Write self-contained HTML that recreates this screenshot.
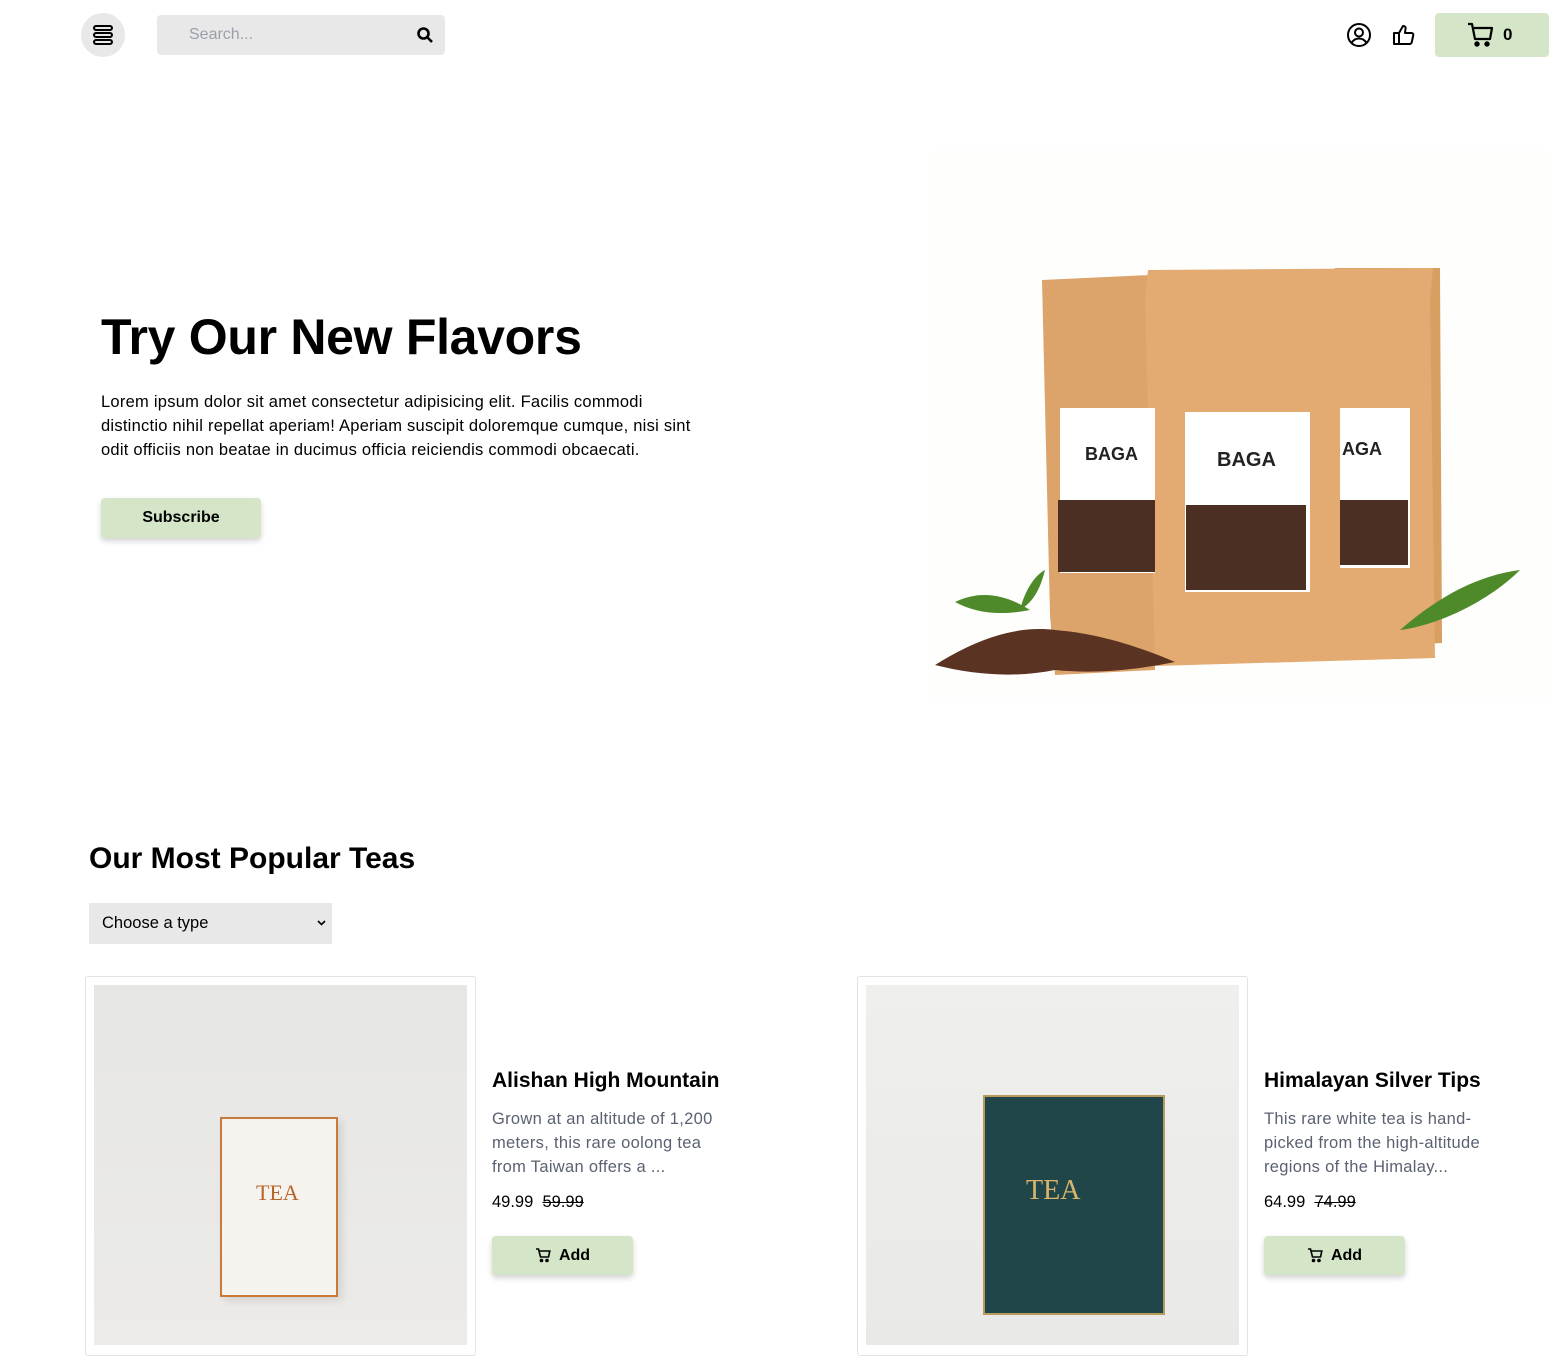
<!DOCTYPE html>
<html><head><style>
*{box-sizing:border-box;margin:0;padding:0}
body{width:1561px;height:1321px;overflow:hidden;background:#fff;font-family:"Liberation Sans",sans-serif;color:#000;position:relative}
.a{position:absolute}
.btn{background:#d4e6c7;border-radius:4px;box-shadow:0 3px 6px rgba(0,0,0,.18);font-weight:bold;font-size:16px;display:flex;align-items:center;justify-content:center;gap:8px}
.card{border:1px solid #e2e2e2;border-radius:3px}
.desc{color:#5a6170;font-size:16.5px;line-height:24px;letter-spacing:.3px}
</style></head><body>
<div class="a" style="left:81px;top:13px;width:44px;height:44px;border-radius:50%;background:#e8e8e8"></div>
<svg class="a" style="left:92px;top:24px" width="22" height="22" viewBox="0 0 22 22" fill="none" stroke="#000" stroke-width="2"><rect x="2" y="2" width="18" height="4" rx="2"/><rect x="2" y="9" width="18" height="4" rx="2"/><rect x="2" y="16" width="18" height="4" rx="2"/></svg>
<div class="a" style="left:157px;top:15px;width:288px;height:40px;background:#e8e8e8;border-radius:4px"></div>
<div class="a" style="left:189px;top:26px;font-size:16px;color:#9aa0ab">Search...</div>
<svg class="a" style="left:416px;top:26px" width="18" height="18" viewBox="0 0 18 18" fill="none" stroke="#000" stroke-width="2.6"><circle cx="7.5" cy="7.5" r="5"/><path d="M11 11l5 5"/></svg>
<svg class="a" style="left:1346px;top:22px" width="26" height="26" viewBox="0 0 26 26" fill="none" stroke="#000" stroke-width="2"><circle cx="13" cy="13" r="11"/><circle cx="13" cy="10.5" r="4"/><path d="M5.5 21c2-3.5 4.5-4.5 7.5-4.5s5.5 1 7.5 4.5"/></svg>
<svg class="a" style="left:1392px;top:23px" width="24" height="24" viewBox="0 0 24 24" fill="none" stroke="#000" stroke-width="2" stroke-linejoin="round"><rect x="2" y="10" width="5" height="11"/><path d="M7 10l4-7c2 0 3 1 2.5 3L13 10h6.5c1.2 0 2 1 1.8 2l-1.5 7c-.2 1-1 2-2 2H7"/></svg>
<div class="a" style="left:1435px;top:13px;width:114px;height:44px;background:#d4e6c7;border-radius:4px"></div>
<svg class="a" style="left:1467px;top:22px" width="28" height="26" viewBox="0 0 28 26" fill="none" stroke="#000" stroke-width="2.2" stroke-linejoin="round"><path d="M1 2h4l3 15h15l2-11H7"/><circle cx="10" cy="22" r="1.6" fill="#000"/><circle cx="20" cy="22" r="1.6" fill="#000"/></svg>
<div class="a" style="left:1503px;top:25px;font-size:17px;font-weight:bold">0</div>

<div class="a" style="left:101px;top:308px;font-size:50px;font-weight:bold;letter-spacing:-.3px">Try Our New Flavors</div>
<div class="a" style="left:101px;top:390px;width:605px;font-size:16.5px;line-height:24px;letter-spacing:.25px">Lorem ipsum dolor sit amet consectetur adipisicing elit. Facilis commodi distinctio nihil repellat aperiam! Aperiam suscipit doloremque cumque, nisi sint odit officiis non beatae in ducimus officia reiciendis commodi obcaecati.</div>
<div class="a btn" style="left:101px;top:498px;width:160px;height:40px">Subscribe</div>

<svg class="a" style="left:930px;top:150px" width="620" height="550" viewBox="0 0 620 550">
<rect width="620" height="550" fill="#fefefd"/>
<path d="M112 130l108-5 5 395-100 5-5-60z" fill="#dca36a"/>
<path d="M405 118l105 0 2 375-100 5z" fill="#d99e62"/>
<path d="M218 120l285-2-3 30 5 360-280 8-10-365z" fill="#e3ab72"/>
<rect x="130" y="258" width="95" height="165" fill="#fff"/><rect x="128" y="350" width="97" height="72" fill="#4a2f22"/>
<rect x="255" y="262" width="125" height="180" fill="#fff"/><rect x="256" y="355" width="120" height="85" fill="#4a2f22"/>
<rect x="410" y="258" width="70" height="160" fill="#fff"/><rect x="410" y="350" width="68" height="65" fill="#4a2f22"/>
<text x="155" y="310" font-family="Liberation Sans" font-weight="bold" font-size="18" fill="#222">BAGA</text>
<text x="287" y="316" font-family="Liberation Sans" font-weight="bold" font-size="20" fill="#222">BAGA</text>
<text x="412" y="305" font-family="Liberation Sans" font-weight="bold" font-size="18" fill="#222">AGA</text>
<path d="M5 515c40-25 80-40 120-35 40 3 80 15 120 32-40 8-80 12-120 8-40 8-80 5-120-5z" fill="#5a3322"/>
<path d="M25 452c25-12 50-8 75 8-30 6-55 3-75-8zM90 460c5-20 15-35 25-40-5 20-12 32-25 40zM470 480c40-35 80-55 120-60-30 30-80 55-120 60z" fill="#4f8a2a"/>
</svg>

<div class="a" style="left:89px;top:842px;font-size:30px;font-weight:bold">Our Most Popular Teas</div>
<div class="a" style="left:89px;top:903px;width:243px;height:41px;background:#e8e8e8;font-size:16.5px;padding:11px 13px">Choose a type<svg style="position:absolute;right:6px;top:17px" width="9" height="6" viewBox="0 0 9 6" fill="none" stroke="#000" stroke-width="1.6"><path d="M1 1l3.5 3.5L8 1"/></svg></div>

<div class="a card" style="left:85px;top:976px;width:391px;height:380px"></div>
<div class="a" style="left:94px;top:985px;width:373px;height:360px;background:linear-gradient(#e6e6e4,#ecebe8)"></div>
<div class="a" style="left:220px;top:1117px;width:118px;height:180px;background:#f6f3ee;border:2px solid #c77a3c;box-shadow:4px 4px 8px rgba(0,0,0,.1)"></div>
<div class="a" style="left:256px;top:1180px;font-family:'Liberation Serif',serif;font-size:22px;color:#b8652a">TEA</div>
<div class="a" style="left:492px;top:1069px;font-size:21px;font-weight:bold">Alishan High Mountain</div>
<div class="a desc" style="left:492px;top:1107px;width:238px">Grown at an altitude of 1,200 meters, this rare oolong tea from Taiwan offers a ...</div>
<div class="a" style="left:492px;top:1193px;font-size:16.5px">49.99 &nbsp;<s>59.99</s></div>
<div class="a btn" style="left:492px;top:1236px;width:141px;height:39px"><svg width="16" height="15" viewBox="0 0 16 15" fill="none" stroke="#000" stroke-width="1.6"><path d="M1 1h2.5l2 8h8l1.3-6H4.2"/><circle cx="6.5" cy="12.5" r="1" fill="#000"/><circle cx="12" cy="12.5" r="1" fill="#000"/></svg>Add</div>

<div class="a card" style="left:857px;top:976px;width:391px;height:380px"></div>
<div class="a" style="left:866px;top:985px;width:373px;height:360px;background:linear-gradient(#efefed,#e9e9e7)"></div>
<div class="a" style="left:983px;top:1095px;width:182px;height:220px;background:#21464a;border:2px solid #b89a5a"></div>
<div class="a" style="left:1026px;top:1175px;font-family:'Liberation Serif',serif;font-size:28px;color:#d8b56a">TEA</div>
<div class="a" style="left:1264px;top:1069px;font-size:21px;font-weight:bold">Himalayan Silver Tips</div>
<div class="a desc" style="left:1264px;top:1107px;width:245px">This rare white tea is hand-picked from the high-altitude regions of the Himalay...</div>
<div class="a" style="left:1264px;top:1193px;font-size:16.5px">64.99 &nbsp;<s>74.99</s></div>
<div class="a btn" style="left:1264px;top:1236px;width:141px;height:39px"><svg width="16" height="15" viewBox="0 0 16 15" fill="none" stroke="#000" stroke-width="1.6"><path d="M1 1h2.5l2 8h8l1.3-6H4.2"/><circle cx="6.5" cy="12.5" r="1" fill="#000"/><circle cx="12" cy="12.5" r="1" fill="#000"/></svg>Add</div>
</body></html>
